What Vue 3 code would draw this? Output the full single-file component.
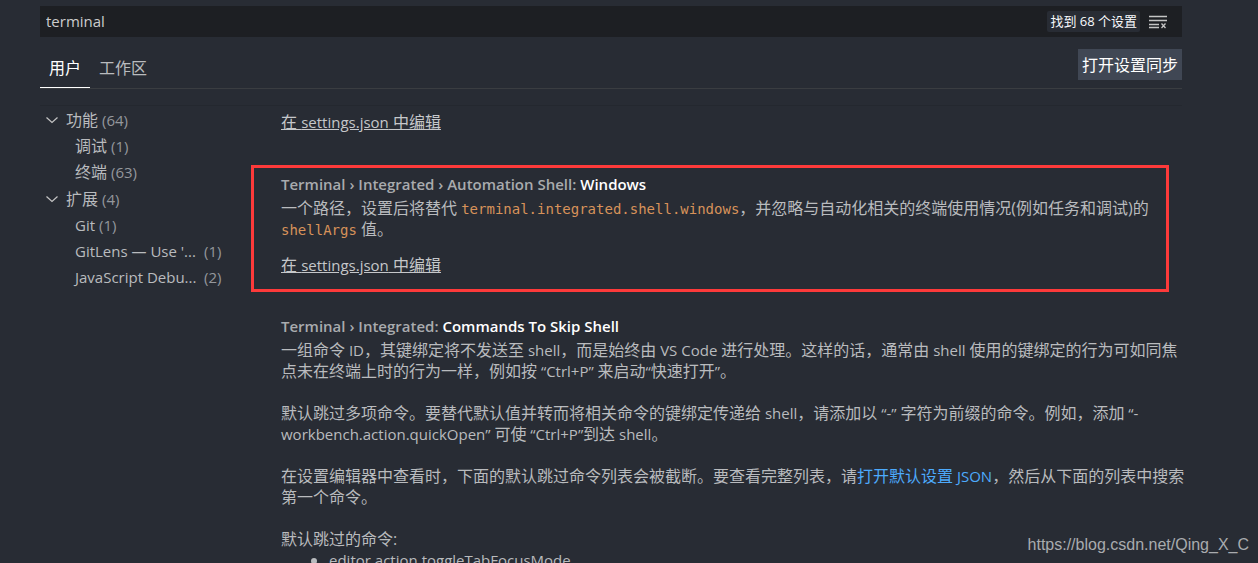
<script setup>
import { ref } from 'vue'

const query = ref('terminal')
const tabs = ['用户', '工作区']
const activeTab = ref('用户')

const groups = [
  {
    name: '功能',
    count: 64,
    items: [
      { name: '调试', count: 1 },
      { name: '终端', count: 63 },
    ],
  },
  {
    name: '扩展',
    count: 4,
    items: [
      { name: 'Git', count: 1, latin: true },
      { name: "GitLens — Use '...", count: 1, latin: true, full: true },
      { name: 'JavaScript Debu...', count: 2, latin: true, full: true },
    ],
  },
]
</script>

<template>
  <div class="settings">
    <header>
      <div class="search">
        <input v-model="query" type="text" aria-label="搜索设置" class="search-input" />
        <span class="found">找到 68 个设置</span>
        <button class="clear" type="button" aria-label="清除搜索">
          <svg viewBox="0 0 18 14" width="18" height="14" fill="none" stroke="#c5c5c5">
            <path d="M0 1.5h18M0 5.5h18M0 9.5h10M0 12.5h10" stroke-width="1.3" />
            <path d="M12.5 8.5l4 4.5M16.5 8.5l-4 4.5" stroke-width="1.3" />
          </svg>
        </button>
      </div>
      <div class="bar">
        <nav class="tabs">
          <button
            v-for="tab in tabs"
            :key="tab"
            type="button"
            class="tab"
            :class="{ active: tab === activeTab }"
            @click="activeTab = tab"
          >{{ tab }}</button>
        </nav>
        <button class="sync" type="button">打开设置同步</button>
      </div>
    </header>

    <div class="body">
      <nav class="tree">
        <div v-for="group in groups" :key="group.name" class="group">
          <div class="row">
            <svg class="chevron" viewBox="0 0 14 14" width="14" height="14" fill="none" stroke="#c5c5c5" stroke-width="1.2">
              <path d="M1.5 4.5l5.5 5 5.5-5" />
            </svg>
            <span class="name">{{ group.name }}</span>
            <span class="count">({{ group.count }})</span>
          </div>
          <div v-for="item in group.items" :key="item.name" class="row child">
            <span class="name" :class="{ en: item.latin, full: item.full }">{{ item.name }}</span>
            <span class="count">({{ item.count }})</span>
          </div>
        </div>
      </nav>

      <main class="list">
        <section class="item first">
          <a href="#" class="edit">在 <span class="en">settings.json</span> 中编辑</a>
        </section>

        <section class="item marked">
          <h3>Terminal › Integrated › Automation Shell: <b>Windows</b></h3>
          <p>
            一个路径，设置后将替代 <code>terminal.integrated.shell.windows</code>，并忽略与自动化相关的终端使用情况(例如任务和调试)的<br />
            <code>shellArgs</code> 值。
          </p>
          <a href="#" class="edit">在 <span class="en">settings.json</span> 中编辑</a>
        </section>

        <section class="item">
          <h3>Terminal › Integrated: <b>Commands To Skip Shell</b></h3>
          <p>
            一组命令<span class="en"> ID</span>，其键绑定将不发送至<span class="en"> shell</span>，而是始终由<span class="en"> VS Code </span>进行处理。这样的话，通常由<span class="en"> shell </span>使用的键绑定的行为可如同焦<br />
            点未在终端上时的行为一样，例如按<span class="en"> “Ctrl+P” </span>来启动<span class="en">“</span>快速打开<span class="en">”</span>。
          </p>
          <p>
            默认跳过多项命令。要替代默认值并转而将相关命令的键绑定传递给<span class="en"> shell</span>，请添加以<span class="en"> “-” </span>字符为前缀的命令。例如，添加<span class="en"> “-</span><br />
            <span class="en">workbench.action.quickOpen” </span>可使<span class="en"> “Ctrl+P”</span>到达<span class="en"> shell</span>。
          </p>
          <p>
            在设置编辑器中查看时，下面的默认跳过命令列表会被截断。要查看完整列表，请<a href="#" class="link">打开默认设置<span class="en"> JSON</span></a>，然后从下面的列表中搜索<br />
            第一个命令。
          </p>
          <p class="lead">默认跳过的命令:</p>
          <ul>
            <li><span class="en">editor.action.toggleTabFocusMode</span></li>
          </ul>
        </section>
      </main>
    </div>

    <div class="watermark">https://blog.csdn.net/Qing_X_C</div>
  </div>
</template>

<style>
body {
  background: #282c34;
}
</style>

<style scoped>
.settings {
  position: relative;
  box-sizing: border-box;
  height: 100vh;
  overflow: hidden;
  padding: 6px 76px 0 40px;
  background: #282c34;
  color: #b9bbbe;
  font: 16px/21px "Open Sans", "Noto Sans CJK SC", sans-serif;
}
button,
input {
  font: inherit;
  border: 0;
  margin: 0;
  background: none;
  color: inherit;
}
.en {
  font-size: 15px;
}
.search {
  display: flex;
  align-items: center;
  height: 31px;
  padding: 0 15px 0 6px;
  background: #1d1f23;
}
.search-input {
  flex: 1;
  min-width: 0;
  padding: 0;
  outline: 0;
  font-size: 15px;
  color: #cccccc;
}
.found {
  padding: 0 3px;
  border-radius: 2px;
  background: #282c34;
  color: #f8fafd;
  font-size: 13px;
}
.clear {
  display: flex;
  margin-left: 9px;
  padding: 0;
}
.bar {
  display: flex;
  align-items: flex-start;
  justify-content: space-between;
  height: 51px;
  border-bottom: 1px solid #3a3d41;
}
.tabs {
  display: flex;
  height: 51px;
}
.tab {
  padding: 20px 9px 8px;
  border-bottom: 1px solid transparent;
}
.tab.active {
  color: #ffffff;
  border-bottom-color: #ffffff;
}
.sync {
  height: 31px;
  margin-top: 12px;
  padding: 2px 4px 0;
  background: #404754;
  color: #ffffff;
}
.body {
  display: flex;
  margin-top: 16px;
  border-top: 1px solid #24282f;
}
.tree {
  flex: 0 0 182px;
  margin-right: 29px;
  padding-top: 1px;
  white-space: nowrap;
}
.row {
  display: flex;
  align-items: center;
  height: 26px;
  padding-left: 5px;
}
.group + .group {
  margin-top: 1px;
}
.child {
  padding-left: 35px;
}
.chevron {
  flex: none;
  margin-right: 7px;
}
.full {
  min-width: 125px;
}
.count {
  margin-left: 4px;
  font-size: 15px;
  color: #94979c;
}
.list {
  flex: 1;
  min-width: 0;
  white-space: nowrap;
}
.item {
  padding: 24px 30px 0;
}
.item.first {
  padding-top: 6px;
  margin-bottom: 32px;
}
.item.marked {
  margin-right: 13px;
  padding: 6px 27px 13px;
  border: 3px solid #fd3a3a;
}
h3 {
  margin: 0 0 3px;
  font-size: 15px;
  font-weight: 600;
  line-height: 21px;
  color: #a9abae;
}
h3 b {
  font-weight: 600;
  color: #ffffff;
}
p {
  margin: 0 0 21px;
}
.marked p {
  margin-bottom: 15px;
}
.lead {
  margin-bottom: 0;
}
code {
  font: 14px/14px "DejaVu Sans Mono", monospace;
  color: #d7925a;
}
.edit {
  display: block;
  width: max-content;
  color: #c5c7ca;
}
.link {
  color: #4daafc;
  text-decoration: none;
}
ul {
  margin: 0;
  padding-left: 48px;
}
.watermark {
  position: absolute;
  right: 9px;
  bottom: 8px;
  font: 16px/21px "Liberation Sans", Arial, sans-serif;
  color: #a9abae;
}
</style>
